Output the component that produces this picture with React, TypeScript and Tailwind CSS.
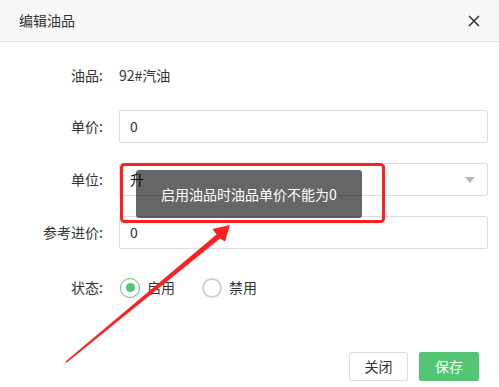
import React from "react";

const font = "font-['Microsoft_YaHei','Noto_Sans_CJK_SC',sans-serif]";

function Label({ children }: { children: React.ReactNode }) {
  return <div className="w-[103px] shrink-0 text-right text-[14px] text-[#333]">{children}</div>;
}

function Radio({ checked, label }: { checked?: boolean; label: string }) {
  return (
    <div className="flex items-center">
      <span
        className={
          checked
            ? "w-[20px] h-[20px] rounded-full border-[1.5px] border-[#52c672] flex items-center justify-center"
            : "w-[20px] h-[20px] rounded-full border-2 border-[#cfcfcf]"
        }
      >
        {checked && <span className="w-[9px] h-[9px] rounded-full bg-[#52c672]" />}
      </span>
      <span className="ml-[7px] text-[14px] text-[#333]">{label}</span>
    </div>
  );
}

export default function App() {
  return (
    <div className={`relative w-[499px] h-[387px] bg-white overflow-hidden ${font}`}>
      {/* header */}
      <div className="h-[42px] bg-[#f8f8f8] border-b border-[#e8e8e8] flex items-center justify-between pl-[19px] pr-[19px]">
        <span className="text-[14px] text-[#333]">编辑油品</span>
        <svg width="12" height="12" viewBox="0 0 12 12">
          <path d="M1 1L11 11M11 1L1 11" stroke="#333" strokeWidth="1.5" />
        </svg>
      </div>

      <div className="pt-[17px] pr-[11px]">
        <div className="flex items-center h-[33px]">
          <Label>油品:</Label>
          <span className="ml-[16px] text-[14px] text-[#333]">92#汽油</span>
        </div>

        <div className="flex items-center mt-[18px]">
          <Label>单价:</Label>
          <div className="ml-[16px] flex-1 h-[33px] border border-[#ddd] rounded-[2px] px-[10px] flex items-center text-[14px] text-[#333]">
            0
          </div>
        </div>

        <div className="flex items-center mt-[20px]">
          <Label>单位:</Label>
          <div className="ml-[16px] flex-1 h-[33px] border border-[#ddd] rounded-[2px] pl-[10px] pr-[12px] flex items-center justify-between text-[14px] text-[#111]">
            <span>升</span>
            <span className="w-0 h-0 border-l-[5px] border-r-[5px] border-t-[6px] border-l-transparent border-r-transparent border-t-[#b5b5b5]" />
          </div>
        </div>

        <div className="flex items-center mt-[20px]">
          <Label>参考进价:</Label>
          <div className="ml-[16px] flex-1 h-[33px] border border-[#ddd] rounded-[2px] px-[10px] flex items-center text-[14px] text-[#333]">
            0
          </div>
        </div>

        <div className="flex items-center mt-[22px] h-[33px]">
          <Label>状态:</Label>
          <div className="ml-[17px] flex items-center gap-[27px]">
            <Radio checked label="启用" />
            <Radio label="禁用" />
          </div>
        </div>
      </div>

      <div className="mt-[48px] pr-[20px] flex justify-end gap-[11px]">
        <button className="w-[59px] h-[29px] border border-[#ddd] rounded-[2px] bg-white text-[14px] text-[#333]">
          关闭
        </button>
        <button className="w-[60px] h-[29px] rounded-[2px] bg-[#52c672] text-[14px] text-white">保存</button>
      </div>

      {/* toast */}
      <div className="absolute left-[136px] top-[170px] w-[226px] h-[48px] rounded-[3px] bg-[rgba(0,0,0,0.6)] flex items-center justify-center text-[14px] text-white">
        启用油品时油品单价不能为0
      </div>

      {/* annotation */}
      <svg className="absolute inset-0 pointer-events-none" width="499" height="387" viewBox="0 0 499 387">
        <rect x="121.5" y="164.5" width="262" height="57" rx="3" fill="none" stroke="#ff1f1f" strokeWidth="3" />
        <polygon
          points="65.5,361.5 216.5,234.5 212.5,229 230,225 225,241.5 220,238.5 66.5,362.8"
          fill="#ff1f1f"
        />
      </svg>
    </div>
  );
}
